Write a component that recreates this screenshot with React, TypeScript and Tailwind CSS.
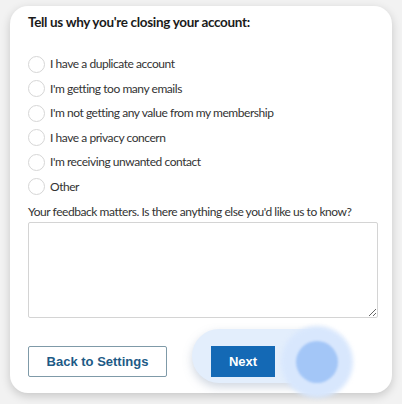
import React from "react";

const options = [
  "I have a duplicate account",
  "I'm getting too many emails",
  "I'm not getting any value from my membership",
  "I have a privacy concern",
  "I'm receiving unwanted contact",
  "Other",
];

export default function App() {
  return (
    <div className="w-[402px] h-[404px] bg-[#f2f2f2] pt-[6px] pl-[10px] overflow-hidden" style={{ fontFamily: "Lato, 'Noto Sans', sans-serif" }}>
      <div className="w-[382px] h-[387px] bg-white rounded-[18px] shadow-[0_3px_10px_rgba(0,0,0,0.18)] px-[18px] pt-[6px]">
        <h1 className="text-[13.5px] leading-[20px] font-bold tracking-[-0.32px] text-[#1b1b1b]">Tell us why you're closing your account:</h1>
        <div className="mt-[20px] flex flex-col">
          {options.map((o) => (
            <label key={o} className="h-[24.5px] flex items-center gap-[5px] text-[12px] tracking-[-0.45px] text-[#333333]">
              <span className="w-[17px] h-[17px] rounded-full border border-[#d6d6d6] bg-white shrink-0" />
              {o}
            </label>
          ))}
        </div>
        <div className="mt-[4px] h-[18px] flex items-center whitespace-nowrap text-[12px] tracking-[-0.45px] text-[#333333]">
          Your feedback matters. Is there anything else you'd like us to know?
        </div>
        <textarea className="mt-[1px] block w-[350px] h-[96px] border border-[#d4d4d4] rounded-[2px] bg-white" />
        <div className="relative mt-[28px] h-[31px] flex items-center" style={{ fontFamily: "'Liberation Sans', Arial, sans-serif" }}>
          <button className="w-[139px] h-[31px] border border-[#7f9aa8] rounded-[2px] bg-white text-[13px] font-bold text-[#1d5a86]">
            Back to Settings
          </button>
          <div className="absolute left-[164px] top-[-17px] w-[150px] h-[54px] rounded-full bg-[#e3eefc] shadow-[0_4px_10px_rgba(120,140,170,0.35)]" />
          <div className="absolute left-[253px] top-[-20px] w-[72px] h-[72px] rounded-full bg-[#d8e7fd] blur-[2px]" />
          <div className="absolute left-[268px] top-[-5px] w-[42px] h-[42px] rounded-full bg-[#a3c6f7] blur-[1px]" />
          <button className="relative ml-[44px] w-[64px] h-[31px] bg-[#1469b5] text-white text-[13px] font-bold">
            Next
          </button>
        </div>
      </div>
    </div>
  );
}
